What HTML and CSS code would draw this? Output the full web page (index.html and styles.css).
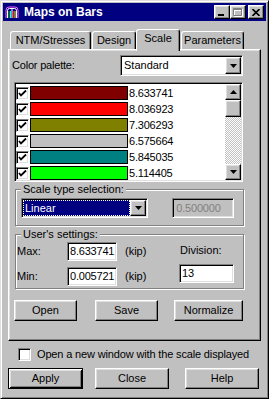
FILE: index.html
```html
<!DOCTYPE html>
<html lang="en">
<head>
    <meta charset="UTF-8">
    <meta name="viewport" content="width=device-width, initial-scale=1.0">
    <title>Maps on Bars</title>
    <link rel="stylesheet" href="styles.css">
</head>
<body>
    <div class="window">
        <div class="titlebar">
            <svg class="app-icon" width="14" height="13" viewBox="0 0 14 13">
                <path d="M1 12 V4 Q1 1 4 1 H10 Q13 1 13 4 V12" fill="none" stroke="#ff60ff" stroke-width="1"/>
                <path d="M2.5 12 V4.5 Q2.5 2.5 4.5 2.5 H9.5 Q11.5 2.5 11.5 4.5 V12" fill="none" stroke="#ffffff" stroke-width="1"/>
                <path d="M4 12 V5" stroke="#00c000" stroke-width="1"/>
                <path d="M5.5 12 V5" stroke="#00ffff" stroke-width="1"/>
                <path d="M7 12 V3" stroke="#ffffff" stroke-width="1"/>
                <path d="M8.5 12 V5" stroke="#ff0000" stroke-width="1"/>
                <path d="M10 12 V5" stroke="#ffff00" stroke-width="1"/>
            </svg>
            <span class="title">Maps on Bars</span>
            <div class="title-buttons">
                <span class="tbtn">
                    <svg width="8" height="7" viewBox="0 0 8 7"><rect x="0" y="5" width="6" height="2" fill="#000"/></svg>
                </span>
                <span class="tbtn">
                    <svg width="10" height="9" viewBox="0 0 10 9">
                        <path d="M1.5 1.5 H9.5 V8.5 H1.5 Z M1.5 2.5 H9.5" fill="none" stroke="#fff" stroke-width="1"/>
                        <path d="M0.5 0.5 H8.5 V7.5 H0.5 Z M0.5 1.5 H8.5" fill="none" stroke="#808080" stroke-width="1"/>
                    </svg>
                </span>
                <span class="tbtn tbtn-close">
                    <svg width="8" height="7" viewBox="0 0 8 7"><path d="M0.5 0 L7.5 7 M7.5 0 L0.5 7" stroke="#000" stroke-width="1.6"/></svg>
                </span>
            </div>
        </div>

        <div class="tabs">
            <div class="tab tab-ntm">NTM/Stresses</div>
            <div class="tab tab-design">Design</div>
            <div class="tab tab-scale active">Scale</div>
            <div class="tab tab-params">Parameters</div>
        </div>

        <div class="panel">
            <div class="palette-row">
                <span class="palette-label">Color palette:</span>
                <div class="combo palette-combo">
                    <span class="combo-text">Standard</span>
                    <span class="drop-btn"><svg width="7" height="4" viewBox="0 0 7 4"><polygon points="0,0 7,0 3.5,4" fill="#000"/></svg></span>
                </div>
            </div>

            <div class="listbox">
                <div class="rows">
                    <div class="row">
                        <span class="check"><svg width="9" height="9" viewBox="0 0 9 9"><path d="M1 4 L3 6.5 L8 1.5" fill="none" stroke="#000" stroke-width="1.8"/></svg></span>
                        <span class="swatch maroon"></span>
                        <span class="value">8.633741</span>
                    </div>
                    <div class="row">
                        <span class="check"><svg width="9" height="9" viewBox="0 0 9 9"><path d="M1 4 L3 6.5 L8 1.5" fill="none" stroke="#000" stroke-width="1.8"/></svg></span>
                        <span class="swatch red"></span>
                        <span class="value">8.036923</span>
                    </div>
                    <div class="row">
                        <span class="check"><svg width="9" height="9" viewBox="0 0 9 9"><path d="M1 4 L3 6.5 L8 1.5" fill="none" stroke="#000" stroke-width="1.8"/></svg></span>
                        <span class="swatch olive"></span>
                        <span class="value">7.306293</span>
                    </div>
                    <div class="row">
                        <span class="check"><svg width="9" height="9" viewBox="0 0 9 9"><path d="M1 4 L3 6.5 L8 1.5" fill="none" stroke="#000" stroke-width="1.8"/></svg></span>
                        <span class="swatch silver"></span>
                        <span class="value">6.575664</span>
                    </div>
                    <div class="row">
                        <span class="check"><svg width="9" height="9" viewBox="0 0 9 9"><path d="M1 4 L3 6.5 L8 1.5" fill="none" stroke="#000" stroke-width="1.8"/></svg></span>
                        <span class="swatch teal"></span>
                        <span class="value">5.845035</span>
                    </div>
                    <div class="row">
                        <span class="check"><svg width="9" height="9" viewBox="0 0 9 9"><path d="M1 4 L3 6.5 L8 1.5" fill="none" stroke="#000" stroke-width="1.8"/></svg></span>
                        <span class="swatch lime"></span>
                        <span class="value">5.114405</span>
                    </div>
                </div>
                <div class="scrollbar">
                    <span class="sb-btn"><svg width="7" height="4" viewBox="0 0 7 4"><polygon points="0,4 7,4 3.5,0" fill="#000"/></svg></span>
                    <span class="sb-thumb"></span>
                    <span class="sb-track"></span>
                    <span class="sb-btn"><svg width="7" height="4" viewBox="0 0 7 4"><polygon points="0,0 7,0 3.5,4" fill="#000"/></svg></span>
                </div>
            </div>

            <fieldset class="group scale-group">
                <legend>Scale type selection:</legend>
                <div class="combo linear-combo">
                    <span class="combo-text selected">Linear</span>
                    <span class="drop-btn"><svg width="7" height="4" viewBox="0 0 7 4"><polygon points="0,0 7,0 3.5,4" fill="#000"/></svg></span>
                </div>
                <div class="field disabled">0.500000</div>
            </fieldset>

            <fieldset class="group user-group">
                <legend>User's settings:</legend>
                <div class="limits">
                    <span>Max:</span>
                    <div class="field">8.633741</div>
                    <span>(kip)</span>
                    <span>Min:</span>
                    <div class="field">0.005721</div>
                    <span>(kip)</span>
                </div>
                <div class="division">
                    <span>Division:</span>
                    <div class="field division-field">13</div>
                </div>
            </fieldset>

            <div class="panel-buttons">
                <div class="btn btn-open">Open</div>
                <div class="btn btn-save">Save</div>
                <div class="btn btn-normalize">Normalize</div>
            </div>
        </div>

        <div class="check-row">
            <span class="check"></span>
            <span class="check-label">Open a new window with the scale displayed</span>
        </div>

        <div class="dialog-buttons">
            <div class="btn btn-default btn-apply">Apply</div>
            <div class="btn btn-close">Close</div>
            <div class="btn btn-help">Help</div>
        </div>
    </div>
</body>
</html>
```

FILE: styles.css
```css
* {
    box-sizing: border-box;
}

body {
    margin: 0;
    background: #c0c0c0;
    font-family: "Liberation Sans", Arial, sans-serif;
    font-size: 11px;
    line-height: 13px;
    color: #000;
}

/* window frame */
.window {
    width: 269px;
    height: 399px;
    padding: 2px;
    display: flex;
    flex-direction: column;
    background: #c0c0c0;
    border: 1px solid;
    border-color: #dfdfdf #000 #000 #dfdfdf;
    box-shadow: inset 1px 1px #fff, inset -1px -1px #808080;
}

.titlebar {
    height: 18px;
    display: flex;
    align-items: center;
    padding: 0 2px;
    background: #000080;
    color: #fff;
}

.app-icon {
    margin-right: 5px;
}

.title {
    flex: 1;
    font-size: 12px;
    font-weight: bold;
}

.title-buttons {
    display: flex;
}

.tbtn {
    width: 16px;
    height: 14px;
    display: flex;
    align-items: center;
    justify-content: center;
    background: #c0c0c0;
    border: 1px solid;
    border-color: #fff #000 #000 #fff;
    box-shadow: inset -1px -1px #808080, inset 1px 1px #dfdfdf;
}

.tbtn-close {
    margin-left: 2px;
}

/* tabs */
.tabs {
    height: 20px;
    display: flex;
    align-items: flex-end;
    margin: 8px 0 0 7px;
}

.tab {
    height: 18px;
    display: flex;
    align-items: center;
    justify-content: center;
    padding-bottom: 1px;
    background: #c0c0c0;
    border-top: 1px solid #fff;
    border-left: 1px solid #fff;
    border-right: 1px solid #000;
    border-radius: 3px 3px 0 0;
    box-shadow: inset -1px 0 #808080;
}

.tab-ntm { width: 81px; }
.tab-design { width: 44px; margin-left: 1px; }
.tab-scale { width: 44px; }
.tab-params { width: 63px; margin-left: 1px; }

.tab.active {
    height: 22px;
    margin-bottom: -2px;
    padding-bottom: 5px;
    position: relative;
    z-index: 1;
}

/* tab page */
.panel {
    width: 253px;
    height: 292px;
    margin-left: 5px;
    padding: 5px 0 0 5px;
    border: 1px solid;
    border-color: #fff #000 #000 #fff;
    box-shadow: inset -1px -1px #808080, inset 1px 1px #dfdfdf;
}

.palette-row {
    height: 21px;
    display: flex;
    align-items: center;
}

.palette-label {
    width: 108px;
    margin-left: -2px;
    letter-spacing: -0.2px;
}

/* sunken controls */
.combo, .listbox, .field, .check {
    border: 1px solid;
    border-color: #808080 #fff #fff #808080;
    box-shadow: inset 1px 1px #000, inset -1px -1px #dfdfdf;
    background: #fff;
}

.combo {
    display: flex;
    padding: 1px;
}

.palette-combo {
    width: 123px;
    height: 21px;
}

.combo-text {
    flex: 1;
    display: flex;
    align-items: center;
    padding-left: 2px;
}

.combo-text.selected {
    background: #000080;
    color: #fff;
    outline: 1px dotted #fff;
    outline-offset: -1px;
}

.drop-btn, .sb-btn, .sb-thumb, .btn {
    background: #c0c0c0;
    border: 1px solid;
    border-color: #fff #000 #000 #fff;
    box-shadow: inset -1px -1px #808080, inset 1px 1px #dfdfdf;
}

.drop-btn {
    width: 16px;
    display: flex;
    align-items: center;
    justify-content: center;
}

/* palette list */
.listbox {
    width: 229px;
    height: 100px;
    margin-top: 6px;
    padding: 1px;
    display: flex;
}

.rows {
    flex: 1;
    padding-top: 1px;
}

.row {
    height: 16px;
    display: flex;
    align-items: center;
}

.check {
    width: 13px;
    height: 13px;
    display: flex;
    align-items: center;
    justify-content: center;
}

.swatch {
    width: 98px;
    height: 14px;
    margin-left: 1px;
    border: 1px solid #000;
}

.maroon { background: #800000; }
.red { background: #ff0000; }
.olive { background: #808000; }
.silver { background: #c0c0c0; }
.teal { background: #008080; }
.lime { background: #00ff00; }

.value {
    margin-left: 1px;
    letter-spacing: -0.2px;
}

.scrollbar {
    width: 16px;
    display: flex;
    flex-direction: column;
}

.sb-btn {
    height: 16px;
    display: flex;
    align-items: center;
    justify-content: center;
}

.sb-thumb {
    height: 17px;
}

.sb-track {
    flex: 1;
    background: repeating-conic-gradient(#c0c0c0 0 25%, #fff 0 50%) 0 0 / 2px 2px;
}

/* group boxes */
.group {
    width: 229px;
    margin: 1px 0 0 1px;
    min-width: 0;
    border: 1px solid #808080;
    box-shadow: 1px 1px 0 #fff, inset 1px 1px 0 #fff;
}

.group legend {
    padding: 0 2px;
    background: #c0c0c0;
    line-height: 13px;
}

.scale-group {
    display: flex;
    padding: 2px 9px 7px 5px;
}

.linear-combo {
    width: 128px;
    height: 20px;
}

.field {
    height: 19px;
    display: flex;
    align-items: center;
    padding: 1px 2px;
    letter-spacing: -0.2px;
    white-space: nowrap;
    overflow: hidden;
}

.field.disabled {
    width: 62px;
    height: 20px;
    margin-left: 24px;
    padding-left: 3px;
    background: #c0c0c0;
    color: #808080;
}

.user-group {
    display: flex;
    margin-top: 2px;
    padding: 1px 9px 2px 1px;
}

.user-group legend {
    margin-left: 4px;
}

.limits {
    display: grid;
    grid-template-columns: 42px 50px auto;
    grid-template-rows: 19px 19px;
    column-gap: 8px;
    row-gap: 6px;
    align-items: center;
}

.division {
    margin-left: auto;
    width: 55px;
    padding-top: 2px;
    display: flex;
    flex-direction: column;
}

.division span {
    padding-left: 1px;
}

.division-field {
    margin-top: 7px;
}

/* buttons */
.btn {
    height: 21px;
    display: flex;
    align-items: center;
    justify-content: center;
}

.panel-buttons {
    display: flex;
    margin-top: 11px;
}

.btn-open { width: 63px; }
.btn-save { width: 63px; margin-left: 18px; }
.btn-normalize { width: 69px; margin-left: 16px; }

.check-row {
    height: 13px;
    display: flex;
    align-items: center;
    margin: 7px 0 0 15px;
}

.check-label {
    margin-left: 6px;
    letter-spacing: -0.15px;
}

.dialog-buttons {
    display: flex;
    margin: 7px 0 0 5px;
}

.btn-default {
    border-color: #000;
    box-shadow: inset 1px 1px #fff, inset -1px -1px #000, inset 2px 2px #dfdfdf, inset -2px -2px #808080;
}

.btn-apply { width: 75px; }
.btn-close { width: 74px; margin-left: 12px; }
.btn-help { width: 74px; margin-left: 16px; }
```
